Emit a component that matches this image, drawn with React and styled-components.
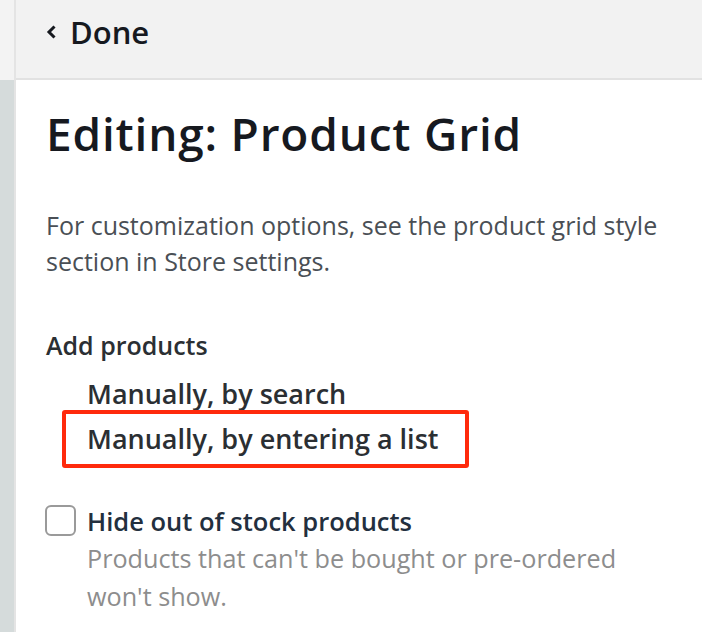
import styled, { createGlobalStyle } from "styled-components";

const GlobalStyle = createGlobalStyle`
  body {
    margin: 0;
    background: #ffffff;
    font-family: "Open Sans", "Liberation Sans", sans-serif;
  }
`;

const Page = styled.div`
  display: flex;
  min-height: 632px;
`;

const Rail = styled.div`
  width: 14px;
  display: flex;
  flex-direction: column;
  border-right: 2px solid #e4e4e4;
`;

const RailTop = styled.div`
  height: 80px;
  background: #f3f3f3;
`;

const RailBottom = styled.div`
  flex: 1;
  background: #d5dbdb;
`;

const Main = styled.div`
  flex: 1;
  display: flex;
  flex-direction: column;
`;

const Header = styled.div`
  height: 80px;
  background: #f2f2f2;
  border-bottom: 2px solid #e2e2e2;
  display: flex;
  align-items: center;
  padding-left: 30px;
  padding-bottom: 14px;
  box-sizing: border-box;
`;

const BackLink = styled.a`
  display: flex;
  align-items: center;
  gap: 12px;
  font-size: 31px;
  font-weight: 600;
  color: #16191f;
  text-decoration: none;
`;

const Content = styled.div`
  padding: 26px 30px 0 30px;
`;

const Title = styled.h1`
  margin: 0;
  font-size: 46px;
  line-height: 54px;
  font-weight: 600;
  color: #16191f;
  letter-spacing: 0.8px;
`;

const Description = styled.p`
  margin: 47px 0 0;
  font-size: 25px;
  line-height: 36px;
  color: #4a4f55;
`;

const SectionLabel = styled.div`
  margin-top: 50px;
  font-size: 25px;
  line-height: 32px;
  font-weight: 600;
  color: #2b2f33;
`;

const OptionList = styled.div`
  margin-top: 17px;
  display: flex;
  flex-direction: column;
`;

const Option = styled.div`
  padding-left: 41px;
  font-size: 27px;
  font-weight: 600;
  color: #2b2f33;
  line-height: 32px;
`;

const Highlight = styled.div`
  margin-left: 16px;
  width: 407px;
  border: 4px solid #ff2a0c;
  border-radius: 3px;
  box-sizing: border-box;
  padding: 9px 0;

  ${Option} {
    padding-left: 21px;
  }
`;

const CheckRow = styled.label`
  margin-top: 37px;
  display: flex;
  gap: 11px;
  align-items: flex-start;
`;

const Box = styled.span`
  width: 31px;
  height: 31px;
  flex-shrink: 0;
  border: 2px solid #9a9a9a;
  border-radius: 6px;
  box-sizing: border-box;
  margin-left: -1px;
`;

const CheckText = styled.div`
  display: flex;
  flex-direction: column;
`;

const CheckTitle = styled.span`
  font-size: 25.5px;
  font-weight: 600;
  color: #232f3e;
  line-height: 32px;
`;

const CheckHint = styled.span`
  margin-top: 2px;
  font-size: 25.2px;
  line-height: 38px;
  color: #8d8d8d;
  max-width: 550px;
`;

const Chevron = () => (
  <svg width="12" height="16" viewBox="0 0 12 16">
    <path d="M8.5 2.5 L3 8 L8.5 13.5" fill="none" stroke="#16191f" strokeWidth="3" />
  </svg>
);

export default function App() {
  return (
    <>
      <GlobalStyle />
      <Page>
        <Rail>
          <RailTop />
          <RailBottom />
        </Rail>
        <Main>
          <Header>
            <BackLink href="#">
              <Chevron />
              Done
            </BackLink>
          </Header>
          <Content>
            <Title>Editing: Product Grid</Title>
            <Description>
              For customization options, see the product grid style section in Store settings.
            </Description>
            <SectionLabel>Add products</SectionLabel>
            <OptionList>
              <Option>Manually, by search</Option>
              <Highlight>
                <Option>Manually, by entering a list</Option>
              </Highlight>
            </OptionList>
            <CheckRow>
              <Box />
              <CheckText>
                <CheckTitle>Hide out of stock products</CheckTitle>
                <CheckHint>Products that can't be bought or pre-ordered won't show.</CheckHint>
              </CheckText>
            </CheckRow>
          </Content>
        </Main>
      </Page>
    </>
  );
}
